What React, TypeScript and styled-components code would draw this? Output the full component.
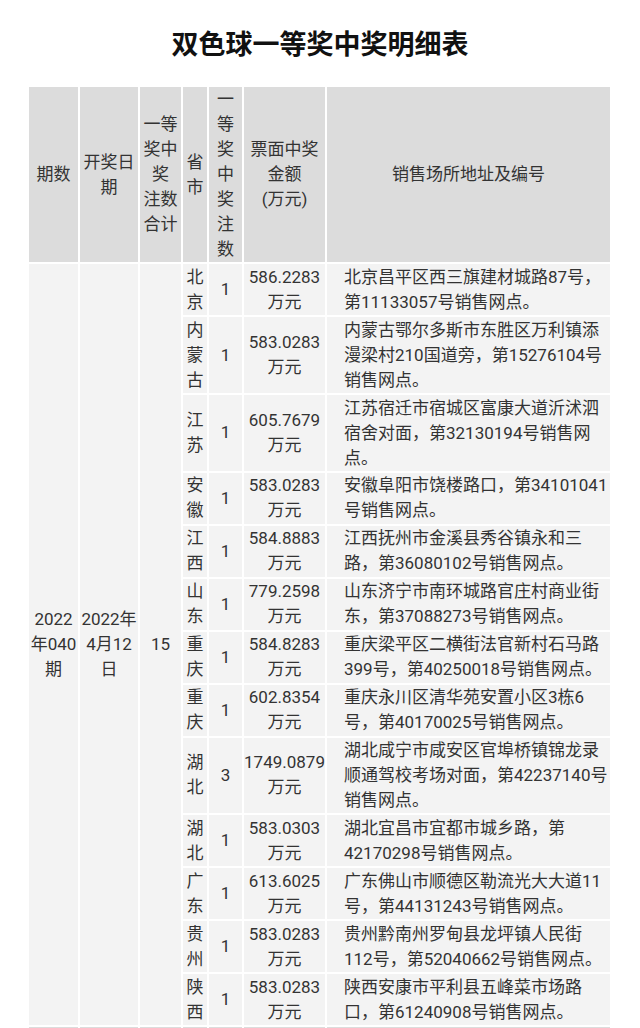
import React from "react";
import styled, { createGlobalStyle } from "styled-components";

const GlobalStyle = createGlobalStyle`
  html, body {
    margin: 0;
    padding: 0;
    background: #ffffff;
  }
  body {
    font-family: Roboto, "Noto Sans CJK SC", "Noto Sans", sans-serif;
    color: #333333;
  }
`;

const Page = styled.div`
  width: 640px;
  padding-top: 27px;
  box-sizing: border-box;
`;

const Title = styled.h1`
  margin: 0 0 26px 0;
  height: 32px;
  line-height: 32px;
  text-align: center;
  font-family: "Noto Sans CJK SC", sans-serif;
  font-size: 27px;
  font-weight: 700;
  color: #111111;
  letter-spacing: 0;
`;

const Table = styled.table`
  margin-left: 27px;
  width: 585px;
  table-layout: fixed;
  border-collapse: separate;
  border-spacing: 2px;
  font-size: 17px;
  line-height: 25px;
`;

const HeadCell = styled.th`
  background: #dcdcdc;
  font-weight: 400;
  color: #333333;
  padding: 0;
  text-align: center;
  vertical-align: middle;
`;

const Cell = styled.td<{ $align?: "left" | "center" }>`
  background: #f3f3f3;
  color: #333333;
  padding: 0.5px ${(p) => (p.$align === "left" ? "0 0 17px" : "0")};
  text-align: ${(p) => p.$align ?? "center"};
  vertical-align: middle;
  white-space: nowrap;
`;

const TailCell = styled.td`
  background: #dcdcdc;
  height: 25px;
  padding: 0;
`;

type Row = {
  prov: string[];
  count: string;
  amount: string;
  addr: string[];
};

const rows: Row[] = [
  { prov: ["北", "京"], count: "1", amount: "586.2283", addr: ["北京昌平区西三旗建材城路87号，", "第11133057号销售网点。"] },
  { prov: ["内", "蒙", "古"], count: "1", amount: "583.0283", addr: ["内蒙古鄂尔多斯市东胜区万利镇添", "漫梁村210国道旁，第15276104号", "销售网点。"] },
  { prov: ["江", "苏"], count: "1", amount: "605.7679", addr: ["江苏宿迁市宿城区富康大道沂沭泗", "宿舍对面，第32130194号销售网", "点。"] },
  { prov: ["安", "徽"], count: "1", amount: "583.0283", addr: ["安徽阜阳市饶楼路口，第34101041", "号销售网点。"] },
  { prov: ["江", "西"], count: "1", amount: "584.8883", addr: ["江西抚州市金溪县秀谷镇永和三", "路，第36080102号销售网点。"] },
  { prov: ["山", "东"], count: "1", amount: "779.2598", addr: ["山东济宁市南环城路官庄村商业街", "东，第37088273号销售网点。"] },
  { prov: ["重", "庆"], count: "1", amount: "584.8283", addr: ["重庆梁平区二横街法官新村石马路", "399号，第40250018号销售网点。"] },
  { prov: ["重", "庆"], count: "1", amount: "602.8354", addr: ["重庆永川区清华苑安置小区3栋6", "号，第40170025号销售网点。"] },
  { prov: ["湖", "北"], count: "3", amount: "1749.0879", addr: ["湖北咸宁市咸安区官埠桥镇锦龙录", "顺通驾校考场对面，第42237140号", "销售网点。"] },
  { prov: ["湖", "北"], count: "1", amount: "583.0303", addr: ["湖北宜昌市宜都市城乡路，第", "42170298号销售网点。"] },
  { prov: ["广", "东"], count: "1", amount: "613.6025", addr: ["广东佛山市顺德区勒流光大大道11", "号，第44131243号销售网点。"] },
  { prov: ["贵", "州"], count: "1", amount: "583.0283", addr: ["贵州黔南州罗甸县龙坪镇人民街", "112号，第52040662号销售网点。"] },
  { prov: ["陕", "西"], count: "1", amount: "583.0283", addr: ["陕西安康市平利县五峰菜市场路", "口，第61240908号销售网点。"] },
];

const Lines: React.FC<{ lines: string[] }> = ({ lines }) => (
  <>
    {lines.map((l, i) => (
      <React.Fragment key={i}>
        {i > 0 && <br />}
        {l}
      </React.Fragment>
    ))}
  </>
);

export default function App() {
  return (
    <>
      <GlobalStyle />
      <Page>
        <Title>双色球一等奖中奖明细表</Title>
        <Table>
          <colgroup>
            <col style={{ width: 49 }} />
            <col style={{ width: 58 }} />
            <col style={{ width: 41 }} />
            <col style={{ width: 24 }} />
            <col style={{ width: 33 }} />
            <col style={{ width: 81 }} />
            <col style={{ width: 283 }} />
          </colgroup>
          <thead>
            <tr>
              <HeadCell>期数</HeadCell>
              <HeadCell>
                <Lines lines={["开奖日", "期"]} />
              </HeadCell>
              <HeadCell>
                <Lines lines={["一等", "奖中", "奖", "注数", "合计"]} />
              </HeadCell>
              <HeadCell>
                <Lines lines={["省", "市"]} />
              </HeadCell>
              <HeadCell>
                <Lines lines={["一", "等", "奖", "中", "奖", "注", "数"]} />
              </HeadCell>
              <HeadCell>
                <Lines lines={["票面中奖", "金额", "(万元)"]} />
              </HeadCell>
              <HeadCell>销售场所地址及编号</HeadCell>
            </tr>
          </thead>
          <tbody>
            {rows.map((r, i) => (
              <tr key={i}>
                {i === 0 && (
                  <>
                    <Cell rowSpan={rows.length}>
                      <Lines lines={["2022", "年040", "期"]} />
                    </Cell>
                    <Cell rowSpan={rows.length}>
                      <Lines lines={["2022年", "4月12", "日"]} />
                    </Cell>
                    <Cell rowSpan={rows.length}>15</Cell>
                  </>
                )}
                <Cell>
                  <Lines lines={r.prov} />
                </Cell>
                <Cell>{r.count}</Cell>
                <Cell>
                  <Lines lines={[r.amount, "万元"]} />
                </Cell>
                <Cell $align="left">
                  <Lines lines={r.addr} />
                </Cell>
              </tr>
            ))}
            <tr>
              <TailCell />
              <TailCell />
              <TailCell />
              <TailCell />
              <TailCell />
              <TailCell />
              <TailCell />
            </tr>
          </tbody>
        </Table>
      </Page>
    </>
  );
}
